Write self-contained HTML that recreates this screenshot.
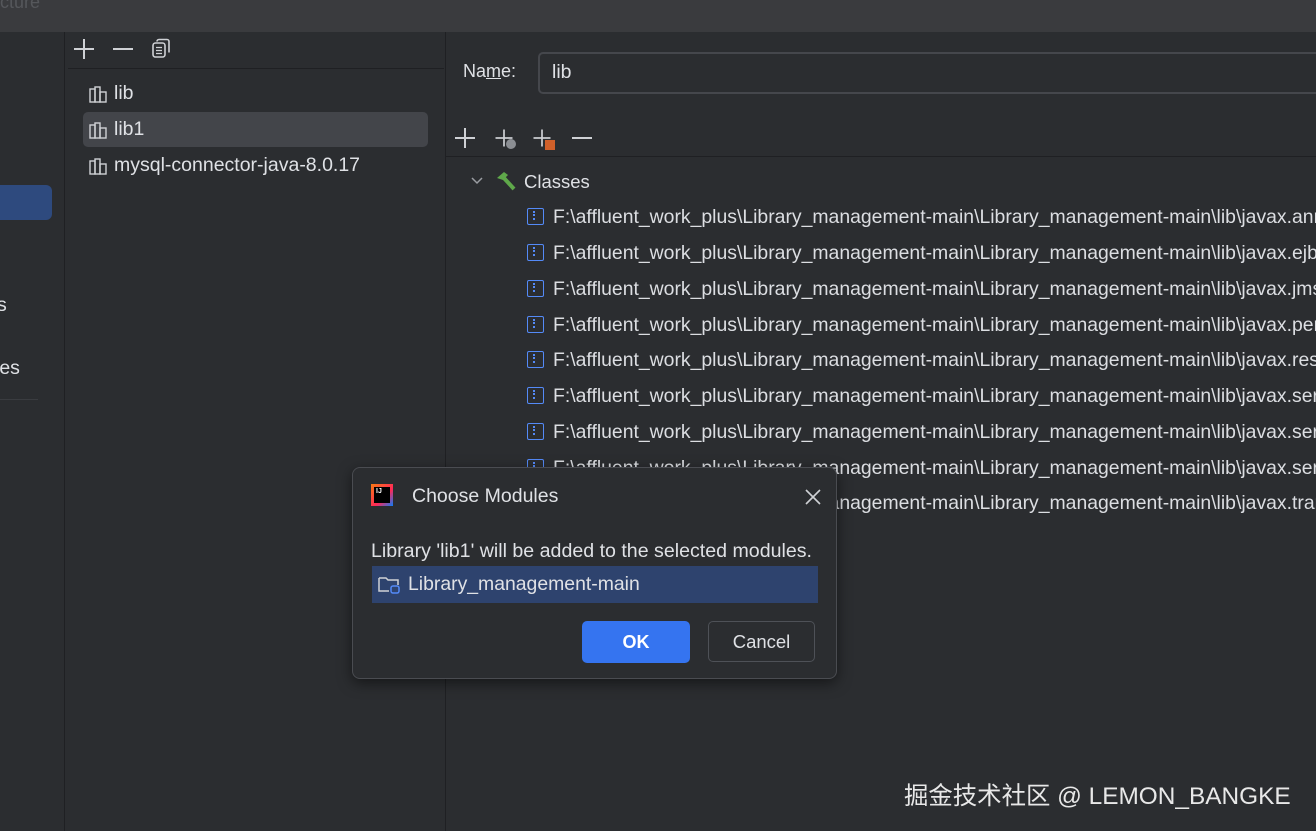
<!DOCTYPE html>
<html><head><meta charset="utf-8"><style>
*{margin:0;padding:0;box-sizing:border-box}
html,body{overflow:hidden}
body{width:1316px;height:831px;background:#2b2d30;font-family:"Liberation Sans","Noto Sans CJK SC",sans-serif;color:#dfe1e5;position:relative}
.abs{position:absolute}
.t{font-size:19.5px;white-space:nowrap}
.row{position:absolute;left:527px;width:789px;overflow:hidden;height:26px;white-space:nowrap;font-size:19.4px;color:#dcdee2}
.ic{display:inline-block;width:17px;height:17px;border:1.5px solid #548af7;border-radius:2px;vertical-align:-2px;margin-right:9px;position:relative}
.ic:after{content:"";position:absolute;left:5px;top:2px;width:3px;height:9px;border-left:2px dotted #548af7}
.pl{position:absolute;width:20px;height:20px}
.pl:before{content:"";position:absolute;left:0;top:9px;width:20px;height:2px;background:#cfd1d5}
.pl:after{content:"";position:absolute;left:9px;top:0;width:2px;height:20px;background:#cfd1d5}
</style></head><body>
<div class="abs" style="left:0;top:0;width:1316px;height:32px;background:#3a3b3e"></div>
<div class="abs" style="left:0;top:-8px;color:#55575b;font-size:18px">cture</div>
<div class="abs" style="left:0;top:185px;width:52px;height:35px;background:#2e4a7e;border-radius:0 6px 6px 0"></div>
<div class="abs t" style="left:-3px;top:294px">s</div>
<div class="abs t" style="left:-5px;top:357px">ies</div>
<div class="abs" style="left:0;top:399px;width:38px;height:1px;background:#3a3c40"></div>
<div class="abs" style="left:64px;top:32px;width:1px;height:799px;background:#1f2023"></div>
<div class="pl" style="left:74px;top:39px"></div>
<div class="abs" style="left:113px;top:48px;width:20px;height:2px;background:#cfd1d5"></div>
<svg class="abs" style="left:151px;top:38px" width="22" height="22" fill="none" stroke="#cfd1d5" stroke-width="1.6"><path d="M6 3.5a2 2 0 0 1 2-2h8a2 2 0 0 1 2 2v11"/><rect x="2" y="5" width="12" height="14" rx="2.5"/><path d="M5 9.5h6M5 12.5h6M5 15.5h6" stroke-width="1.3"/></svg>
<div class="abs" style="left:68px;top:68px;width:376px;height:1px;background:#1f2023"></div>
<div class="abs" style="left:83px;top:112px;width:345px;height:35px;background:#43454a;border-radius:5px"></div>
<svg class="abs" style="left:89px;top:86px" width="20" height="100" fill="none" stroke="#cfd1d5" stroke-width="1.4">
<g id="b"><rect x="1" y="3" width="5" height="13"/><rect x="6" y="1" width="5" height="15"/><rect x="11" y="6" width="6" height="10"/></g>
<use href="#b" y="36"/><use href="#b" y="72"/></svg>
<div class="abs t" style="left:114px;top:82px">lib</div>
<div class="abs t" style="left:114px;top:118px">lib1</div>
<div class="abs t" style="left:114px;top:154px">mysql-connector-java-8.0.17</div>
<div class="abs" style="left:445px;top:32px;width:1px;height:799px;background:#1f2023"></div>
<div class="abs" style="left:463px;top:61px;font-size:18px">Na<u>m</u>e:</div>
<div class="abs" style="left:538px;top:52px;width:778px;height:42px;border:2px solid #45474c;border-right:none;border-radius:5px 0 0 5px;background:#2b2d30"></div>
<div class="abs" style="left:552px;top:61px;font-size:19.5px">lib</div>
<div class="pl" style="left:455px;top:128px"></div>
<div class="pl" style="left:494px;top:128px;transform:scale(.85)"></div>
<div class="abs" style="left:506px;top:139px;width:10px;height:10px;border-radius:50%;background:#8b8e93"></div>
<div class="pl" style="left:532px;top:128px;transform:scale(.85)"></div>
<div class="abs" style="left:545px;top:140px;width:10px;height:10px;background:#d0602a"></div>
<div class="abs" style="left:572px;top:137px;width:20px;height:2px;background:#cfd1d5"></div>
<div class="abs" style="left:446px;top:156px;width:870px;height:1px;background:#1f2023"></div>
<svg class="abs" style="left:470px;top:176px" width="14" height="10"><path d="M2 2l5 5 5-5" stroke="#9a9da2" stroke-width="1.5" fill="none"/></svg>
<svg class="abs" style="left:495px;top:170px" width="24" height="22"><path d="M2 8 L9 2 L13 5 L8 10 Z" fill="#5fa84a"/><path d="M8 7 L19 19" stroke="#5fa84a" stroke-width="4"/></svg>
<div class="abs t" style="left:524px;top:171px;font-size:18.5px">Classes</div>
<div class="row" style="top:206px"><span class="ic"></span>F:\affluent_work_plus\Library_management-main\Library_management-main\lib\javax.annotation</div>
<div class="row" style="top:242px"><span class="ic"></span>F:\affluent_work_plus\Library_management-main\Library_management-main\lib\javax.ejb</div>
<div class="row" style="top:278px"><span class="ic"></span>F:\affluent_work_plus\Library_management-main\Library_management-main\lib\javax.jms</div>
<div class="row" style="top:314px"><span class="ic"></span>F:\affluent_work_plus\Library_management-main\Library_management-main\lib\javax.persistence</div>
<div class="row" style="top:349px"><span class="ic"></span>F:\affluent_work_plus\Library_management-main\Library_management-main\lib\javax.resource</div>
<div class="row" style="top:385px"><span class="ic"></span>F:\affluent_work_plus\Library_management-main\Library_management-main\lib\javax.servlet</div>
<div class="row" style="top:421px"><span class="ic"></span>F:\affluent_work_plus\Library_management-main\Library_management-main\lib\javax.servlet</div>
<div class="row" style="top:457px"><span class="ic"></span>F:\affluent_work_plus\Library_management-main\Library_management-main\lib\javax.servlet</div>
<div class="row" style="top:492px"><span class="ic"></span>F:\affluent_work_plus\Library_management-main\Library_management-main\lib\javax.transaction</div>
<div class="abs" style="left:352px;top:467px;width:485px;height:212px;background:#2b2d30;border:1px solid #4a4c51;border-radius:8px;box-shadow:0 4px 14px rgba(0,0,0,.5)">
 <div class="abs" style="left:18px;top:16px;width:22px;height:22px;background:linear-gradient(135deg,#f97a12,#fe2857 60%,#087cfa)"></div>
 <div class="abs" style="left:21px;top:19px;width:16px;height:16px;background:#000;color:#fff;font-size:7px;font-weight:bold;padding:1px 2px">IJ</div>
 <div class="abs t" style="left:59px;top:17px">Choose Modules</div>
 <svg class="abs" style="left:452px;top:21px" width="16" height="16"><path d="M1 1l14 14M15 1L1 15" stroke="#cfd1d5" stroke-width="1.6"/></svg>
 <div class="abs t" style="left:18px;top:72px;font-size:19.6px">Library 'lib1' will be added to the selected modules.</div>
 <div class="abs" style="left:19px;top:98px;width:446px;height:37px;background:#2e436e"></div>
 <svg class="abs" style="left:25px;top:107px" width="24" height="20" fill="none" stroke="#cfd1d5" stroke-width="1.5"><path d="M1 3h7l2 2h10v5M1 3v13h10"/><rect x="13" y="11" width="8" height="7" rx="2" stroke="#548af7"/></svg>
 <div class="abs t" style="left:55px;top:105px;font-size:19.4px">Library_management-main</div>
 <div class="abs" style="left:229px;top:153px;width:108px;height:42px;background:#3574f0;border-radius:5px;color:#fff;font-weight:bold;font-size:18px;text-align:center;line-height:42px">OK</div>
 <div class="abs" style="left:355px;top:153px;width:107px;height:41px;border:1.5px solid #4e5157;border-radius:5px;font-size:18.5px;text-align:center;line-height:40px">Cancel</div>
</div>
<div class="abs" style="left:904px;top:777px;font-size:24.4px;color:#e8e8e8;white-space:nowrap">掘金技术社区 @ LEMON_BANGKE</div>
</body></html>
